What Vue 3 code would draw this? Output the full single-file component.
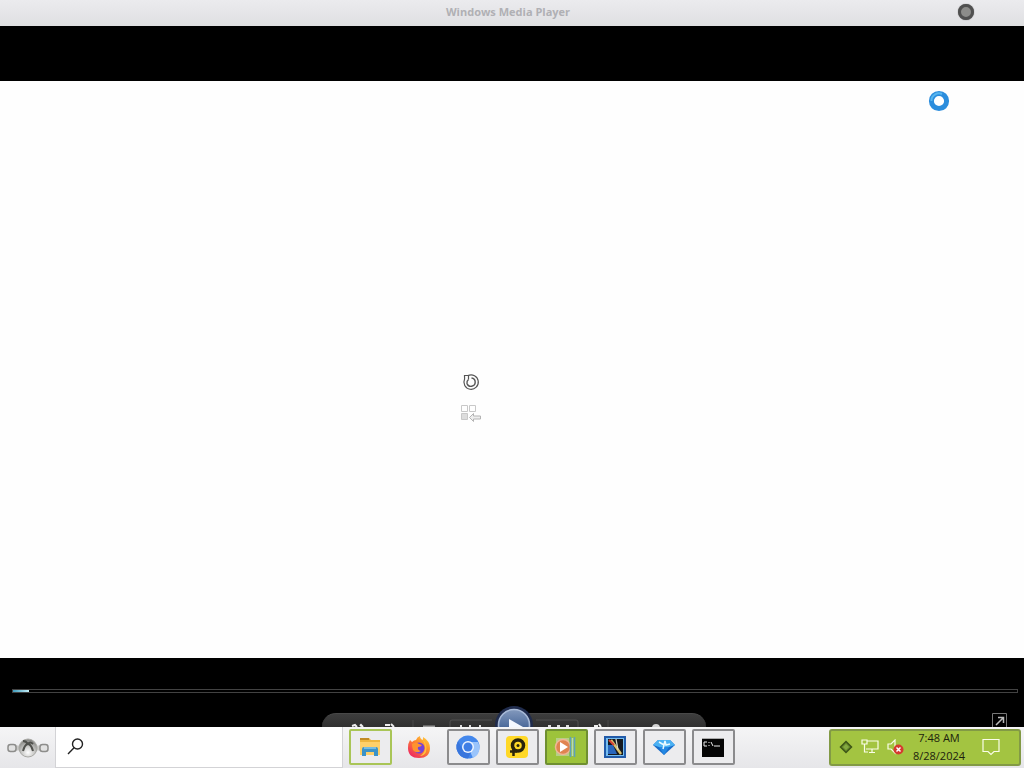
<script setup>
import { ref } from 'vue'

const query = ref('')
const position = ref(1.6)
const apps = [
  { id: 'explorer', label: 'File Explorer', state: 'ready' },
  { id: 'firefox', label: 'Firefox', state: 'pinned' },
  { id: 'chromium', label: 'Chromium', state: 'open' },
  { id: 'potplayer', label: 'PotPlayer', state: 'open' },
  { id: 'wmp', label: 'Windows Media Player', state: 'active' },
  { id: 'tuner', label: 'Theme editor', state: 'open' },
  { id: 'gem', label: 'Diamond', state: 'open' },
  { id: 'cmd', label: 'Command Prompt', state: 'open' },
]
</script>

<template>
  <div class="desktop">
    <header class="titlebar">
      <h1 class="title">Windows Media Player</h1>
      <button class="orb" aria-label="Close"></button>
    </header>

    <main class="player">
      <section class="video">
        <button class="plain" aria-label="Play again">
          <svg width="18" height="18" viewBox="0 0 18 18" fill="none" stroke="#555">
            <path d="M6 2.600A7.200 7.200 0 1 1 2.600 6L2.500 2.500H6.500V6.500" stroke-width="1.200" />
            <path d="M6.500 6.500Q4.500 8 5 10.500A4.200 4.200 0 1 0 9.500 5" stroke-width="1.400" />
          </svg>
        </button>
        <button class="plain" aria-label="Go to Library">
          <svg width="22" height="18" viewBox="0 0 22 18" fill="none" stroke="#c8c8c8">
            <path d="M1.5 1.5h6v6h-6zM9.5 1.5h6v6h-6z" />
            <path d="M1.5 9.5h6v6h-6z" fill="#ddd" />
            <path d="M9.5 13.5l4-4v2.5h7v3h-7v2.5z" fill="#eee" stroke="#b4b4b4" />
          </svg>
        </button>
      </section>

      <section class="transport">
        <div class="seek" role="progressbar" aria-label="Seek" :aria-valuenow="position">
          <div class="played" :style="{ width: position + '%' }"></div>
        </div>
        <div class="dock">
          <div class="panel">
            <svg class="glyphs" width="384" height="14" viewBox="0 0 384 14" fill="none">
              <path d="M30 12l3-1 2 2M38 12l1-1 2 2M63 11h5M69 10l3 3" stroke="#eee" stroke-width="2" />
              <path d="M91 6v8M286 6v8" stroke="#484848" />
              <path d="M101 12.500h12" stroke="#999" stroke-width="2" />
              <path d="M128 14V8q0-2 2-2h40M214 6h40q2 0 2 2v6" stroke="#505050" />
              <path d="M138 12h2M147 12h2M157 12h2M226 12h3M235 12h3M244 12h3" stroke="#ddd" stroke-width="2" />
              <path d="M272 12h4M279 13l-2-3" stroke="#eee" stroke-width="2" />
              <circle cx="334" cy="14" r="4" fill="#d4d4d4" />
            </svg>
          </div>
          <button class="play" aria-label="Play">
            <svg width="38" height="38" viewBox="0 0 38 38">
              <defs>
                <linearGradient id="orbfill" x1="0" y1="0" x2="0" y2="1">
                  <stop offset="0" stop-color="#8399bd" /><stop offset=".5" stop-color="#53709f" /><stop offset="1" stop-color="#1d3970" />
                </linearGradient>
              </defs>
              <circle cx="19" cy="19" r="19" fill="#202c4d" />
              <circle cx="19" cy="19" r="15.5" fill="url(#orbfill)" stroke="#a9bbd8" stroke-width="1.6" />
              <path d="M14 13l14 8-14 8z" fill="#f4f8ff" />
            </svg>
          </button>
          <button class="expand" aria-label="Exit full screen">
            <svg width="15" height="15" viewBox="0 0 15 15" fill="none" stroke="#777">
              <path d="M.5 15V.5h14V15" />
              <path d="M4 12l7-7M6 4.5h5.5V10" stroke="#bbb" stroke-width="1.5" />
            </svg>
          </button>
        </div>
      </section>
      <svg class="busy" width="22" height="22" viewBox="0 0 22 22">
        <circle cx="11" cy="11" r="7.6" fill="#fff" stroke="#2b8ddd" stroke-width="5" />
        <path d="M3.4 11A7.6 7.6 0 0 1 14 4" fill="none" stroke="#58b6ef" stroke-width="2" />
      </svg>
    </main>

    <footer class="taskbar">
      <button class="start" aria-label="Start">
        <svg width="44" height="24" viewBox="0 0 44 24">
          <defs>
            <radialGradient id="metal" cx=".5" cy=".75" r=".7">
              <stop offset="0" stop-color="#fff" /><stop offset=".5" stop-color="#c8c8c6" /><stop offset="1" stop-color="#858582" />
            </radialGradient>
          </defs>
          <path d="M10 12h24" stroke="#c9c9c7" stroke-width="5" />
          <rect x="2" y="8.500" width="8" height="7" rx="2.500" fill="#e2e2e2" stroke="#8d8d8b" stroke-width="1.5" />
          <rect x="34" y="8.500" width="8" height="7" rx="2.500" fill="#e2e2e2" stroke="#8d8d8b" stroke-width="1.5" />
          <circle cx="22" cy="12" r="9" fill="url(#metal)" stroke="#a9a9a5" />
          <path d="M17 5q3 0 5 3 2-3 5 0M22 7q-4 3-5 8M22 7q4 3 5 8" fill="none" stroke="#4f504c" stroke-width="2" />
        </svg>
      </button>
      <label class="search">
        <svg width="18" height="18" viewBox="0 0 18 18" fill="none" stroke="#222" stroke-width="1.4">
          <circle cx="10.500" cy="7" r="5" /><path d="M7 10.700L1 17" />
        </svg>
        <input v-model="query" type="text" aria-label="Search" />
      </label>

      <nav class="apps" aria-label="Running apps">
        <button v-for="app in apps" :key="app.id" class="app" :class="app.state" :aria-label="app.label">
          <svg width="24" height="24" viewBox="0 0 24 24">
            <template v-if="app.id === 'explorer'">
              <path d="M2 3h9l2 2h9v15H2z" fill="#efb63e" />
              <path d="M2 3h9v2H2z" fill="#c28b26" />
              <path d="M2 7h20v13H2z" fill="#ffd069" />
              <path d="M4 21v-7q0-2 2-2h12q2 0 2 2v7h-4v-4H8v4z" fill="#3c93c8" />
              <path d="M6 12h12v2H6z" fill="#77bce0" />
            </template>
            <template v-else-if="app.id === 'firefox'">
              <defs>
                <linearGradient id="fox" x1="1" y1="0" x2=".2" y2="1">
                  <stop offset="0" stop-color="#ffe046" /><stop offset=".45" stop-color="#ff8a2c" /><stop offset="1" stop-color="#ed2464" />
                </linearGradient>
              </defs>
              <path d="M3 5l2 2q2-2 4-2 1-3 4-4 0 3 3 4V2q7 4 7 11 0 10-11 10T1 13q0-5 2-8z" fill="url(#fox)" />
              <circle cx="12" cy="13" r="5.500" fill="#7542d8" />
              <path d="M5 9q4-3 7 0l3 1q-1 2-4 2-1 3 3 4-5 3-8-1-1-3-1-6z" fill="#ff922e" />
              <path d="M15 4q6 5 4 13-2 4-6 4 9-6 2-17z" fill="#ffc13d" />
            </template>
            <template v-else-if="app.id === 'chromium'">
              <circle cx="12" cy="12" r="11.500" fill="#4387ec" />
              <path d="M12 12L17 23q7-3 6.500-12L22 7H12z" fill="#9ac4fb" />
              <path d="M2 6L7 15q3 4 8 2l-3 6.500Q3 23 .500 14 0 9 2 6z" fill="#3976dd" />
              <circle cx="12" cy="12" r="6" fill="#eef4ff" /><circle cx="12" cy="12" r="4.500" fill="#3f7ee5" />
            </template>
            <template v-else-if="app.id === 'potplayer'">
              <rect x="1" y="1" width="22" height="22" rx="4" fill="#ffd827" />
              <circle cx="13" cy="10.500" r="5.500" fill="none" stroke="#29240c" stroke-width="3.500" />
              <circle cx="13" cy="10.500" r="1.500" fill="#29240c" />
              <path d="M8.500 12v9M5 16.500h7" stroke="#29240c" stroke-width="2.500" />
            </template>
            <template v-else-if="app.id === 'wmp'">
              <path d="M2 3h13v18H2z" fill="#b6cf87" />
              <circle cx="9" cy="12" r="7.500" fill="#e08450" stroke="#f0b595" stroke-width="1.500" />
              <path d="M6 7l8 5-8 5z" fill="#fff" />
              <path d="M16.500 2v20M20.500 2v20" stroke="#5da0bb" stroke-width="1.600" />
              <path d="M18.500 3v18" stroke="#b9d9b5" stroke-width="1.500" />
            </template>
            <template v-else-if="app.id === 'tuner'">
              <rect x="1" y="1" width="22" height="22" fill="#225ba9" />
              <rect x="3" y="3" width="18" height="18" fill="#75bdf0" />
              <rect x="5" y="4" width="15" height="16" fill="#15191f" />
              <path d="M5 10h5l4 9H5z" fill="#2866bd" />
              <path d="M8 5l10 14" stroke="#d9c06d" stroke-width="2.500" />
              <path d="M13 4l2 11" stroke="#d8d9c5" stroke-width="1.300" />
              <path d="M6 5l5 5" stroke="#da4436" stroke-width="2" />
            </template>
            <template v-else-if="app.id === 'gem'">
              <path d="M1 10l5-5h12l5 5-11 10z" fill="#176bc9" />
              <path d="M1 10l5-5h12l5 5-6 2H7z" fill="#4ab1f3" />
              <path d="M7 12h10l-5 8z" fill="#2388e3" />
              <path d="M7 7l5 3 1-4 1 4 4-1M12 10l-1 4" fill="none" stroke="#e9faff" stroke-width="1.500" />
            </template>
            <template v-else>
              <rect x="1" y="3" width="22" height="19" fill="#050505" />
              <path d="M1 3.500h22" stroke="#aaa" />
              <path d="M6 7H3v4h3M8 7v1M8 10v1M10 7l2 4M13 11h6" fill="none" stroke="#eee" />
            </template>
          </svg>
        </button>
      </nav>

      <aside class="tray">
        <button class="plain" aria-label="Tray app">
          <svg width="14" height="14" viewBox="0 0 14 14"><path d="M7 1.500L12.500 7 7 12.500 1.500 7z" fill="#66892a" stroke="#3e5618" stroke-width="1.500" /><path d="M7 4l3 3-3 3-3-3z" fill="#84a941" /></svg>
        </button>
        <button class="plain" aria-label="Network">
          <svg width="18" height="16" viewBox="0 0 18 16" fill="none" stroke="#fafde8" stroke-width="1.200">
            <path d="M6 2h11v8H5M1 1h5v4H1zM3.500 5v8H7M11 10v3M8 13.500h6" />
          </svg>
        </button>
        <button class="plain" aria-label="Volume muted">
          <svg width="17" height="16" viewBox="0 0 17 16">
            <path d="M1 5h3l4-4v13l-4-4H1z" fill="none" stroke="#fafde8" stroke-width="1.200" />
            <circle cx="11.500" cy="10.500" r="5" fill="#d53b2f" />
            <path d="M9.500 8.500l4 4M13.500 8.500l-4 4" stroke="#fff" stroke-width="1.500" />
          </svg>
        </button>
        <button class="clock"><span>7:48 AM</span><span>8/28/2024</span></button>
        <button class="plain" aria-label="Notifications">
          <svg width="18" height="18" viewBox="0 0 18 18" fill="none" stroke="#fafde8" stroke-width="1.200"><path d="M1 1.500h16v12h-5l-3 3-3-3H1z" /></svg>
        </button>
      </aside>
    </footer>
  </div>
</template>

<style>
body { margin: 0; background: #000; }
</style>

<style scoped>
* { box-sizing: border-box; }
button { margin: 0; padding: 0; border: 0; background: none; font: inherit; color: inherit; }
svg { display: block; flex: none; }
.desktop {
  display: flex; flex-direction: column; height: 100vh; overflow: hidden;
  font-family: "Open Sans", "Noto Sans", sans-serif; font-size: 11px; color: #1c220d;
}
.titlebar {
  display: grid; grid-template-columns: 1fr auto 1fr; align-items: center;
  flex: none; height: 26px; padding: 0 8px 2px 0;
  background: linear-gradient(#ebebee, #e4e4e7 60%, #dfe0e2);
}
.title { grid-column: 2; margin: 0; font-size: 11px; line-height: 16px; font-weight: 700; color: #b0b0b4; }
.orb {
  justify-self: end; width: 16px; height: 16px; margin-right: 42px; border: 3px solid #505050;
  border-radius: 50%; background: #8c8c8a; box-shadow: 0 0 1px #555;
}
.player { position: relative; display: flex; flex-direction: column; flex: 1; min-height: 0; padding-top: 55px; background: #000; }
.video {
  display: flex; flex-direction: column; align-items: center; justify-content: center; gap: 13px;
  flex: 1; padding: 56px 83px 0 0; background: #fefefe;
}
.busy { position: absolute; top: 64px; right: 74px; }
.transport { display: flex; flex-direction: column; justify-content: space-between; flex: none; height: 69px; padding-top: 31px; overflow: hidden; }
.seek { height: 4px; margin: 0 6px 0 12px; border: 1px solid #424242; background: #000; }
.played { height: 2px; background: linear-gradient(90deg, #3f9cbd, #c3eef7); }
.dock { position: relative; display: flex; justify-content: center; height: 14px; padding-left: 4px; }
.panel { width: 384px; height: 14px; border-top: 1px solid #484848; border-radius: 20px 20px 0 0; background: linear-gradient(#3d3d3d, #303030); overflow: hidden; }
.play { position: absolute; top: -7px; left: calc(50% - 17px); }
.expand { position: absolute; right: 17px; top: 0; }
.taskbar { position: relative; display: flex; flex: none; height: 41px; background: linear-gradient(#f5f5f6, #e6e6e9); }
.start { display: grid; place-items: center; width: 55px; }
.search { display: flex; align-items: center; gap: 8px; width: 288px; padding: 0 10px 2px 11px; border: 1px solid #d3d3d6; border-top: 0; background: #fff; }
.search input { flex: 1; min-width: 0; border: 0; outline: 0; background: none; font: inherit; }
.apps { display: flex; gap: 6px; margin-left: 6px; padding: 2px 0 3px; }
.app { display: grid; place-items: center; width: 43px; padding-right: 2px; border: 2px solid #8b8b8d; border-radius: 2px; background: #ececee; }
.app.ready { border-color: #a9c557; }
.app.pinned { border-color: transparent; background: none; }
.app.active { border-color: #6f8f31; background: #9dc33b; }
.tray {
  display: flex; align-items: center; width: 192px; margin: 2px 3px 2px auto; padding: 0 0 2px 8px;
  gap: 8px; border: 2px solid #829a45; border-radius: 3px; background: #a3c441;
}
.clock { display: flex; flex-direction: column; align-items: center; width: 54px; margin-right: 8px; line-height: 18px; }
</style>
